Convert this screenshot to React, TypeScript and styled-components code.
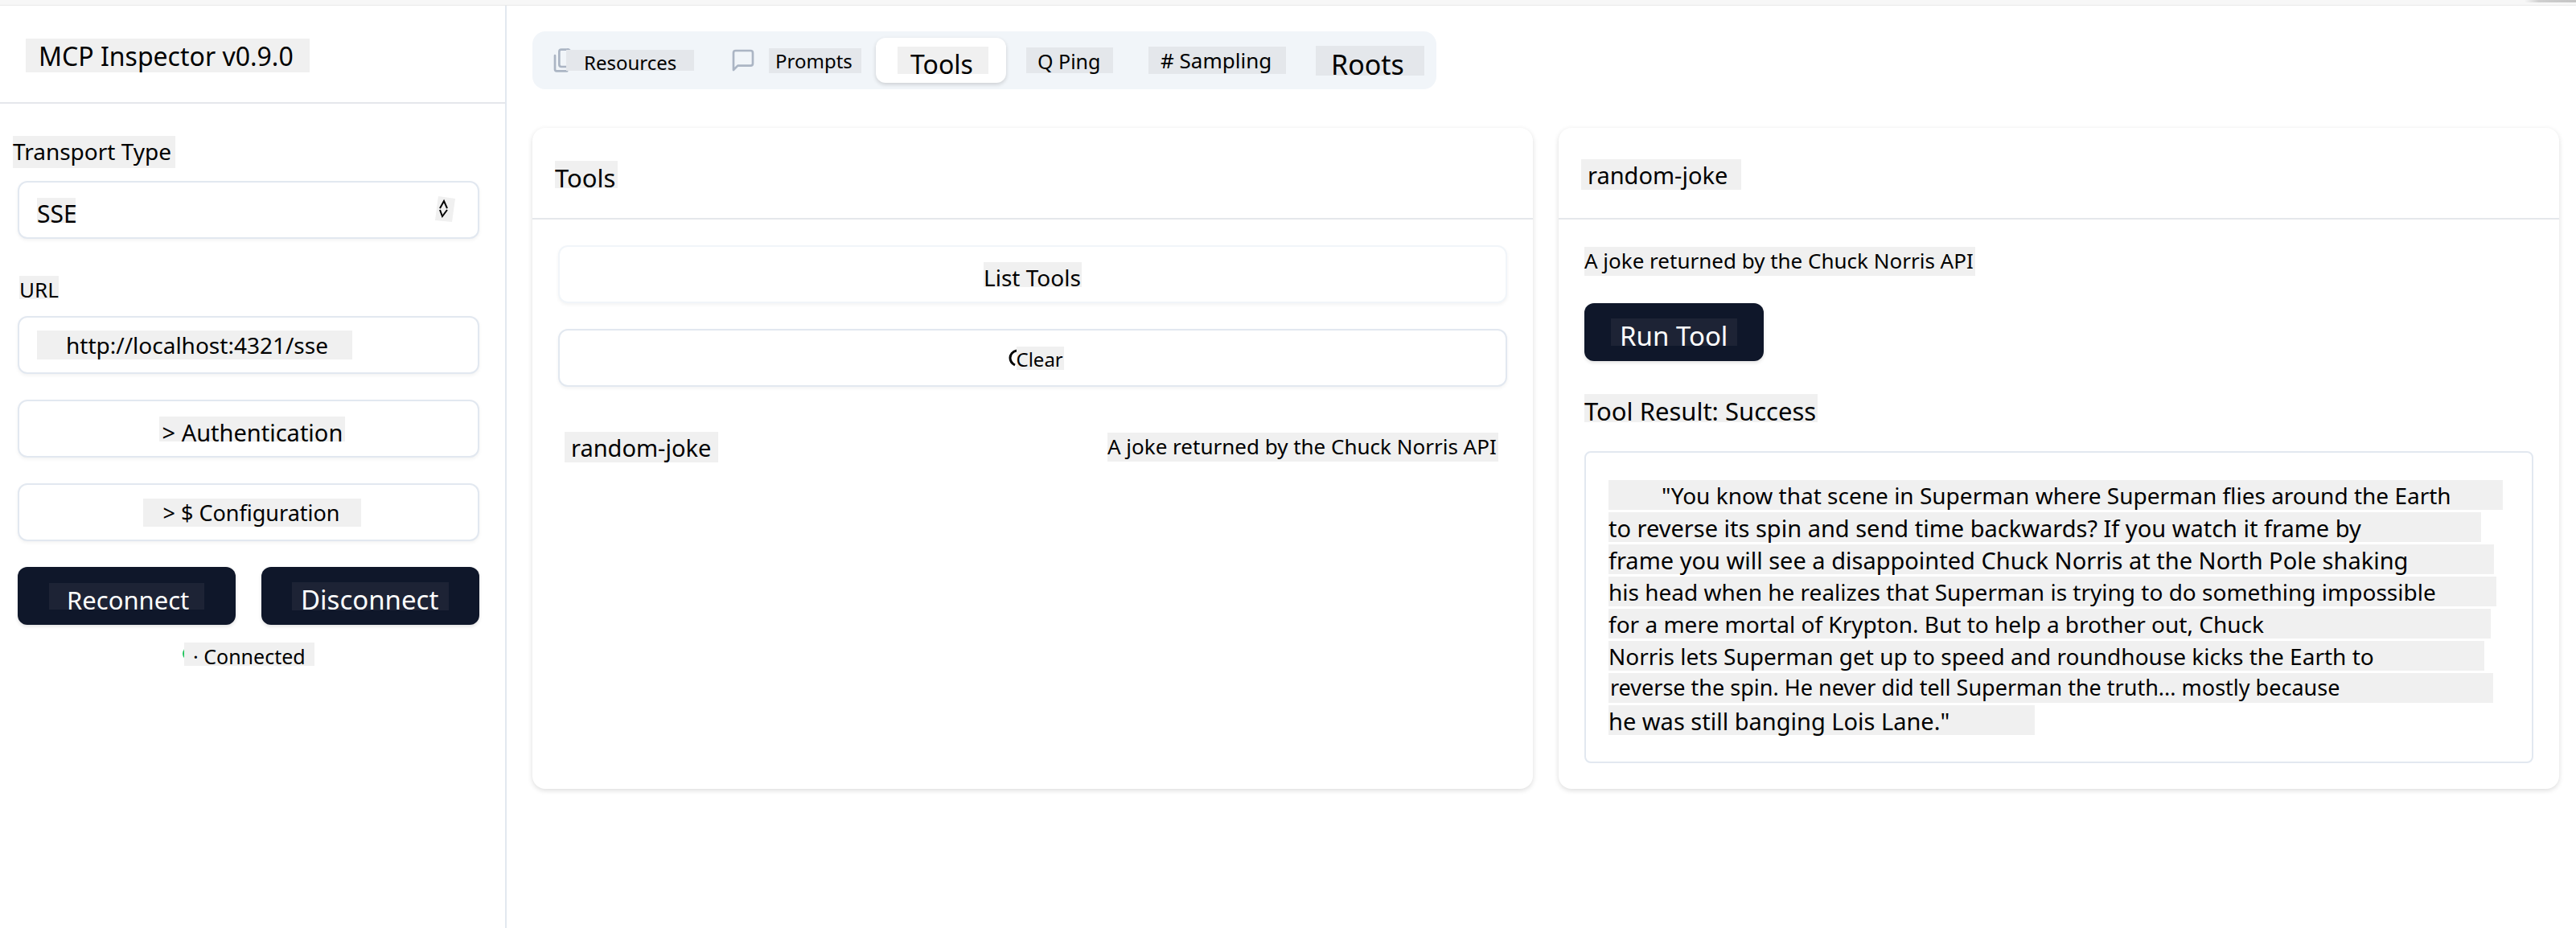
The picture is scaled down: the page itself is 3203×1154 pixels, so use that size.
import React, { useState } from "react";
import styled, { createGlobalStyle, css } from "styled-components";

const color = {
  border: "#e2e8f0",
  faint: "#f1f5f9",
  rule: "#e5e7eb",
  mark: "#f0f0f0",
  tabMark: "#e4e7eb",
  navy: "#0f172a",
  navyMark: "#1d2335",
};

const GlobalStyle = createGlobalStyle`
  *, *::before, *::after { box-sizing: border-box; }
  body {
    margin: 0;
    background: #fff;
    color: #000;
    font-family: "Noto Sans", "Open Sans", sans-serif;
  }
  button, input, select { font: inherit; color: inherit; margin: 0; }
  h1, h2, h3, p { margin: 0; font-weight: 400; }
`;

/* Page frame */

const Page = styled.div`
  min-height: 100vh;
  display: flex;
  flex-direction: column;
`;

const WindowEdge = styled.div`
  height: 7px;
  flex: none;
  display: flex;
  justify-content: flex-end;
  background: #f7f7f7;
  border-bottom: 1px solid #e8e8e8;
`;

const EdgeShade = styled.div`
  width: 64px;
  height: 3px;
  background: linear-gradient(90deg, #f7f7f7, #cfcfcf 18px, #c4c4c4);
`;

const Columns = styled.div`
  flex: 1;
  display: flex;
`;

/* Highlighted run of text */

type MarkProps = {
  $size: number;
  $h: number;
  $w: number;
  $lead?: number;
  $bg?: string;
};

const Mark = styled.span<MarkProps>`
  display: block;
  flex: none;
  width: ${(p) => p.$w}px;
  height: ${(p) => p.$h}px;
  padding-left: ${(p) => p.$lead ?? 0}px;
  background: ${(p) => p.$bg ?? color.mark};
  font-size: ${(p) => p.$size}px;
  line-height: 1.36;
  text-align: left;
  white-space: nowrap;
`;

const IconMark = styled(Mark)`
  position: relative;
  margin-left: -14px;
`;

/* Sidebar */

const Sidebar = styled.aside`
  width: 630px;
  flex: none;
  border-right: 2px solid ${color.border};
`;

const SidebarHeader = styled.header`
  height: 122px;
  padding: 4px 32px 0;
  display: flex;
  align-items: center;
  border-bottom: 2px solid ${color.rule};
`;

const SidebarBody = styled.div`
  padding: 40px 32px 0 22px;
  display: flex;
  flex-direction: column;
  gap: 32px;
`;

const Fields = styled.div`
  display: flex;
  flex-direction: column;
  gap: 40px;
`;

const Field = styled.div`
  display: flex;
  flex-direction: column;
  gap: 16px;
`;

const FieldLabel = styled.label<{ $indent?: number }>`
  height: 40px;
  margin-left: -6px;
  padding-left: ${(p) => p.$indent ?? 0}px;
  display: flex;
  align-items: center;
`;

const boxed = css`
  width: 100%;
  height: 72px;
  border: 2px solid ${color.border};
  border-radius: 12px;
  box-shadow: 0 2px 4px rgba(0, 0, 0, 0.05);
  background-color: #fff;
`;

const SelectWrap = styled.div`
  position: relative;
`;

const Select = styled.select`
  ${boxed}
  display: block;
  appearance: none;
  padding: 8px 22px 0;
  font-size: 30px;
  background-image: linear-gradient(${color.mark}, ${color.mark});
  background-repeat: no-repeat;
  background-size: 48px 31px;
  background-position: 22px center;
`;

const Chevrons = styled.svg`
  position: absolute;
  right: 30px;
  top: 19px;
  width: 25px;
  height: 32px;
  pointer-events: none;
`;

const Input = styled.input`
  ${boxed}
  padding: 0 22px 0 58px;
  font-size: 28px;
  background-image: linear-gradient(${color.mark}, ${color.mark});
  background-repeat: no-repeat;
  background-size: 392px 36px;
  background-position: 22px center;
`;

const OutlineButton = styled.button<{ $faint?: boolean; $shift?: boolean }>`
  ${boxed}
  padding: 0 0 0 ${(p) => (p.$shift ? 8 : 0)}px;
  border-color: ${(p) => (p.$faint ? color.faint : color.border)};
  display: flex;
  align-items: center;
  justify-content: center;
  cursor: pointer;
`;

const PrimaryButton = styled.button`
  height: 72px;
  padding: 0 33px;
  border: 0;
  border-radius: 12px;
  background: ${color.navy};
  color: #fff;
  box-shadow: 0 2px 4px rgba(0, 0, 0, 0.12);
  display: flex;
  align-items: center;
  justify-content: center;
  cursor: pointer;
`;

const ButtonPair = styled.div`
  display: grid;
  grid-template-columns: 1fr 1fr;
  gap: 32px;
`;

const Actions = styled.div`
  display: flex;
  flex-direction: column;
  gap: 16px;
`;

const Status = styled.div`
  height: 40px;
  display: flex;
  align-items: center;
  justify-content: center;
`;

const StatusDot = styled.span`
  width: 16px;
  height: 16px;
  border-radius: 50%;
  background: #22c55e;
`;

/* Main area */

const Main = styled.main`
  flex: 1;
  min-width: 0;
  padding: 32px 21px 32px 32px;
  display: flex;
  flex-direction: column;
  align-items: flex-start;
  gap: 48px;
`;

const TabList = styled.div`
  height: 72px;
  padding: 8px;
  display: flex;
  border-radius: 16px;
  background: ${color.faint};
`;

const Tab = styled.button<{ $before: number; $after: number }>`
  height: 56px;
  border: 0;
  border-radius: 12px;
  background: none;
  padding: 0 ${(p) => p.$after}px 0 ${(p) => p.$before}px;
  display: flex;
  align-items: center;
  cursor: pointer;

  &[aria-selected="true"] {
    background: #fff;
    box-shadow: 0 2px 5px rgba(0, 0, 0, 0.16);
  }
`;

const TabIcon = styled.svg`
  width: 32px;
  height: 32px;
  flex: none;
  fill: none;
  stroke: #abb5c4;
  stroke-width: 2;
  stroke-linecap: round;
  stroke-linejoin: round;
`;

const MessageIcon = styled(TabIcon)`
  margin-right: 16px;
`;

const Cards = styled.div`
  width: 100%;
  display: grid;
  grid-template-columns: 1fr 1fr;
  gap: 32px;
`;

const Card = styled.section`
  border-radius: 16px;
  background: #fff;
  box-shadow: 0 2px 6px rgba(0, 0, 0, 0.14);
`;

const CardHeader = styled.header`
  height: 114px;
  padding: 4px 28px 0;
  display: flex;
  align-items: center;
  border-bottom: 2px solid ${color.rule};
`;

const CardBody = styled.div`
  padding: 32px;
  display: flex;
  flex-direction: column;
  align-items: flex-start;
  gap: 32px;
`;

const ToolRow = styled.button`
  width: 100%;
  padding: 24px 11px 24px 8px;
  border: 0;
  border-radius: 8px;
  background: none;
  display: flex;
  align-items: center;
  justify-content: space-between;
  cursor: pointer;
`;

const ClearIcon = styled.svg`
  width: 10px;
  height: 24px;
  flex: none;
`;

const Description = styled.p`
  height: 40px;
  display: flex;
  align-items: center;
`;

const Result = styled.div`
  width: 100%;
  display: flex;
  flex-direction: column;
  gap: 28px;
`;

const ResultTitle = styled.h3`
  height: 52px;
  display: flex;
  align-items: center;
`;

const ResultBox = styled.div`
  padding: 32px 28px;
  border: 2px solid ${color.border};
  border-radius: 8px;
`;

const Line = styled.span`
  height: 40px;
  display: flex;
  align-items: center;
`;

const tabs = [
  { name: "Resources", before: 16, after: 28, size: 24, w: 159, h: 26, lead: 22 },
  { name: "Prompts", before: 17, after: 18, size: 24, w: 115, h: 31, lead: 8 },
  { name: "Tools", before: 27, after: 22, size: 32, w: 113, h: 34, lead: 16 },
  { name: "Q Ping", before: 25, after: 20, size: 25, w: 108, h: 32, lead: 14 },
  { name: "# Sampling", before: 24, after: 20, size: 26, w: 171, h: 34, lead: 15 },
  { name: "Roots", before: 17, after: 7, size: 34, w: 135, h: 37, lead: 19 },
];

const joke = [
  { text: "\"You know that scene in Superman where Superman flies around the Earth", size: 28, w: 1112, lead: 66 },
  { text: "to reverse its spin and send time backwards? If you watch it frame by", size: 29, w: 1085, lead: 0 },
  { text: "frame you will see a disappointed Chuck Norris at the North Pole shaking", size: 29, w: 1101, lead: 0 },
  { text: "his head when he realizes that Superman is trying to do something impossible", size: 28, w: 1104, lead: 0 },
  { text: "for a mere mortal of Krypton. But to help a brother out, Chuck", size: 28, w: 1097, lead: 0 },
  { text: "Norris lets Superman get up to speed and roundhouse kicks the Earth to", size: 28, w: 1089, lead: 0 },
  { text: "reverse the spin. He never did tell Superman the truth... mostly because", size: 27, w: 1100, lead: 2 },
  { text: "he was still banging Lois Lane.\"", size: 29, w: 530, lead: 0 },
];

function FilesIcon() {
  return (
    <TabIcon viewBox="0 0 24 24" aria-hidden="true">
      <path d="M20 7h-3a2 2 0 0 1-2-2V2" />
      <path d="M9 18a2 2 0 0 1-2-2V4a2 2 0 0 1 2-2h7l4 4v10a2 2 0 0 1-2 2Z" />
      <path d="M3 7.6v12.8A1.6 1.6 0 0 0 4.6 22h9.8" />
    </TabIcon>
  );
}

function BubbleIcon() {
  return (
    <MessageIcon viewBox="0 0 24 24" aria-hidden="true">
      <path d="M21 15a2 2 0 0 1-2 2H7l-4 4V5a2 2 0 0 1 2-2h14a2 2 0 0 1 2 2z" />
    </MessageIcon>
  );
}

export default function App() {
  const [active, setActive] = useState("Tools");
  const [url, setUrl] = useState("http://localhost:4321/sse");

  return (
    <Page>
      <GlobalStyle />
      <WindowEdge>
        <EdgeShade />
      </WindowEdge>
      <Columns>
        <Sidebar>
          <SidebarHeader>
            <h1>
              <Mark $size={32} $w={353} $h={42} $lead={16}>MCP Inspector v0.9.0</Mark>
            </h1>
          </SidebarHeader>
          <SidebarBody>
            <Fields>
              <Field>
                <FieldLabel htmlFor="transport">
                  <Mark $size={28} $w={202} $h={40}>Transport Type</Mark>
                </FieldLabel>
                <SelectWrap>
                  <Select id="transport" defaultValue="SSE">
                    <option>SSE</option>
                    <option>STDIO</option>
                  </Select>
                  <Chevrons viewBox="0 0 25 32" aria-hidden="true">
                    <path d="M4 0L25 3L21 32L0 30Z" fill={color.mark} />
                    <path d="M6 15L11 6L15 15M6 17L9 25L15 17" fill="none" stroke="#000" strokeWidth="2" />
                  </Chevrons>
                </SelectWrap>
              </Field>
              <Field>
                <FieldLabel htmlFor="url" $indent={8}>
                  <Mark $size={26} $w={49} $h={29}>URL</Mark>
                </FieldLabel>
                <Input id="url" type="text" value={url} onChange={(e) => setUrl(e.target.value)} />
              </Field>
            </Fields>
            <OutlineButton type="button" $shift>
              <Mark $size={29} $w={231} $h={31} $lead={4}>&gt; Authentication</Mark>
            </OutlineButton>
            <OutlineButton type="button" $shift>
              <Mark $size={27} $w={271} $h={35} $lead={25}>&gt; $ Configuration</Mark>
            </OutlineButton>
            <Actions>
              <ButtonPair>
                <PrimaryButton type="button">
                  <Mark $size={31} $w={193} $h={33} $lead={22} $bg={color.navyMark}>Reconnect</Mark>
                </PrimaryButton>
                <PrimaryButton type="button">
                  <Mark $size={33} $w={195} $h={35} $lead={11} $bg={color.navyMark}>Disconnect</Mark>
                </PrimaryButton>
              </ButtonPair>
              <Status>
                <StatusDot />
                <IconMark $size={25} $w={162} $h={29} $lead={11}>· Connected</IconMark>
              </Status>
            </Actions>
          </SidebarBody>
        </Sidebar>

        <Main>
          <TabList role="tablist">
            {tabs.map((t) => {
              const Label = t.name === "Resources" ? IconMark : Mark;
              return (
                <Tab
                  key={t.name}
                  type="button"
                  role="tab"
                  aria-selected={active === t.name}
                  $before={t.before}
                  $after={t.after}
                  onClick={() => setActive(t.name)}
                >
                  {t.name === "Resources" && <FilesIcon />}
                  {t.name === "Prompts" && <BubbleIcon />}
                  <Label
                    $size={t.size}
                    $w={t.w}
                    $h={t.h}
                    $lead={t.lead}
                    $bg={active === t.name ? color.mark : color.tabMark}
                  >
                    {t.name}
                  </Label>
                </Tab>
              );
            })}
          </TabList>

          <Cards>
            <Card>
              <CardHeader>
                <h2>
                  <Mark $size={31} $w={78} $h={34}>Tools</Mark>
                </h2>
              </CardHeader>
              <CardBody>
                <OutlineButton type="button" $faint>
                  <Mark $size={28} $w={122} $h={31}>List Tools</Mark>
                </OutlineButton>
                <OutlineButton type="button" $shift>
                  <ClearIcon viewBox="0 0 10 24" aria-hidden="true">
                    <path d="M10 3C5 4 2 8 2 12C2 16 4 19 8 21" fill="none" stroke="#000" strokeWidth="3" />
                  </ClearIcon>
                  <Mark $size={24} $w={59} $h={29}>Clear</Mark>
                </OutlineButton>
                <ToolRow type="button">
                  <Mark $size={29} $w={191} $h={38} $lead={8}>random-joke</Mark>
                  <Mark $size={26} $w={486} $h={36}>A joke returned by the Chuck Norris API</Mark>
                </ToolRow>
              </CardBody>
            </Card>

            <Card>
              <CardHeader>
                <h2>
                  <Mark $size={29} $w={199} $h={38} $lead={8}>random-joke</Mark>
                </h2>
              </CardHeader>
              <CardBody>
                <Description>
                  <Mark $size={26} $w={486} $h={36}>A joke returned by the Chuck Norris API</Mark>
                </Description>
                <PrimaryButton type="button">
                  <Mark $size={33} $w={157} $h={34} $lead={11} $bg={color.navyMark}>Run Tool</Mark>
                </PrimaryButton>
                <Result>
                  <ResultTitle>
                    <Mark $size={31} $w={290} $h={35}>Tool Result: Success</Mark>
                  </ResultTitle>
                  <ResultBox>
                    <p>
                      {joke.map((l) => (
                        <Line key={l.text}>
                          <Mark $size={l.size} $w={l.w} $h={37} $lead={l.lead}>{l.text}</Mark>
                        </Line>
                      ))}
                    </p>
                  </ResultBox>
                </Result>
              </CardBody>
            </Card>
          </Cards>
        </Main>
      </Columns>
    </Page>
  );
}
